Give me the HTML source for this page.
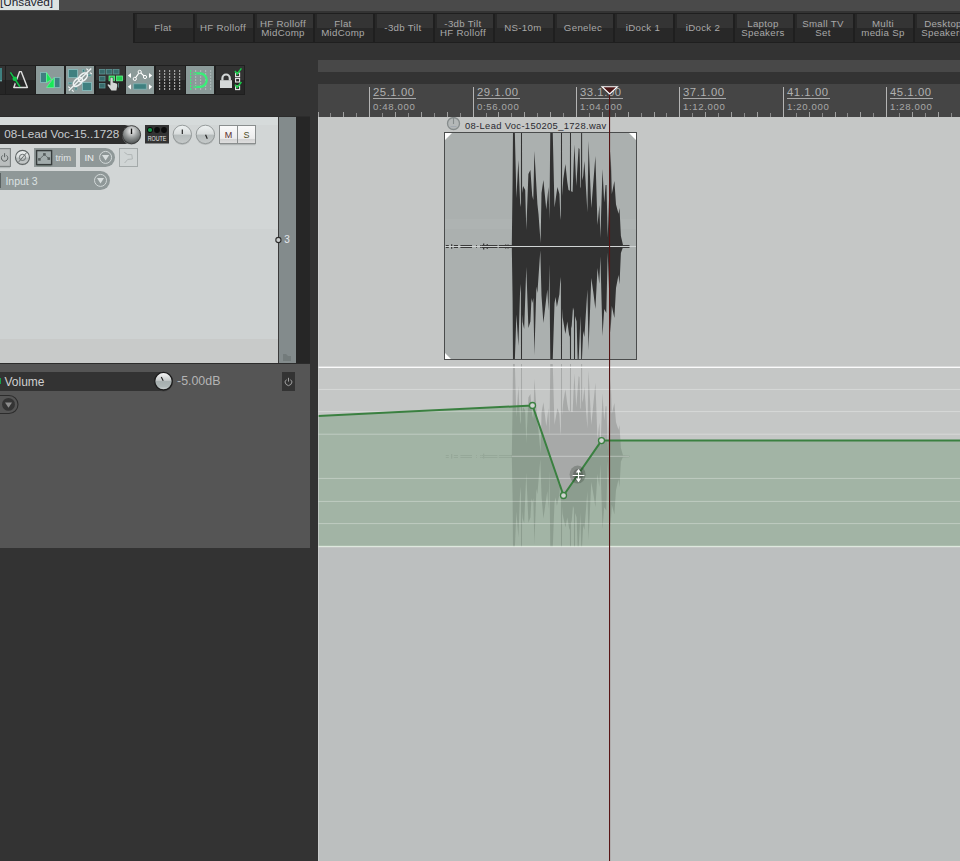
<!DOCTYPE html>
<html><head><meta charset="utf-8"><title>REAPER</title>
<style>
html,body{margin:0;padding:0}
body{width:960px;height:861px;overflow:hidden;background:#333;position:relative;font-family:"Liberation Sans",sans-serif;font-size:10px;color:#a8a8a8}
div,span,svg{position:absolute;box-sizing:border-box}
.t{white-space:nowrap;line-height:1}
/* top */
#topstrip{left:0;top:0;width:960px;height:11px;background:#4a4a4a}
#tab{left:0;top:0;width:59px;height:10px;background:#dde3e3;overflow:hidden}
#tab .t{left:0px;top:-3px;font-size:11.8px;color:#1c1c2c}
/* preset buttons */
#pbar{left:132.75px;top:13px;width:840px;height:30px;background:#1f1f1f}
.pb{top:1px;width:58px;height:28px;background:#282828}
.pb i{position:absolute;left:2px;top:0px;right:0px;height:14px;background:#343434}
.pb .t{left:-0.8px;width:58px;text-align:center;font-size:9.7px;letter-spacing:.3px;color:#a8a8a8;line-height:9px}
/* toolbar */
#tb{left:0;top:65px;width:245px;height:30px;background:#1f1f1f}
.b{top:1px;width:29px;height:28px}
.bd{background:linear-gradient(#333 0,#333 49%,#262626 50%,#262626 100%)}
.bl{background:#8b9a99;width:28px}
.last{width:28px}

#ruler{left:318px;top:84px;width:642px;height:33px;background:#454545}
.rl{font-size:11.3px;color:#b0b0b0;letter-spacing:.55px}
.rs{font-size:9.6px;color:#a8a8a8;letter-spacing:.65px}
#tcp{left:0;top:117px;width:278px;height:246px;background:#d2d6d6}
#tcpbar{left:279px;top:117px;width:17px;height:246px;background:#838b8c}
#nm{left:0;top:125px;width:134px;height:18.5px;background:#2e2e2e;border-radius:0 9px 9px 0}
.g{background:#8f9898}
#envp{left:0;top:364px;width:310px;height:184px;background:#555}

</style></head><body>

<div id="topstrip"></div><div id="tab"><span class="t">[Unsaved]</span></div>
<div id="pbar">
<div class="pb" style="left:2px"><i></i><span class="t" style="top:9px">Flat</span></div>
<div class="pb" style="left:62px"><i></i><span class="t" style="top:9px">HF Rolloff</span></div>
<div class="pb" style="left:122px"><i></i><span class="t" style="top:5px">HF Rolloff<br>MidComp</span></div>
<div class="pb" style="left:182px"><i></i><span class="t" style="top:5px">Flat<br>MidComp</span></div>
<div class="pb" style="left:242px"><i></i><span class="t" style="top:9px">-3db Tilt</span></div>
<div class="pb" style="left:302px"><i></i><span class="t" style="top:5px">-3db Tilt<br>HF Rolloff</span></div>
<div class="pb" style="left:362px"><i></i><span class="t" style="top:9px">NS-10m</span></div>
<div class="pb" style="left:422px"><i></i><span class="t" style="top:9px">Genelec</span></div>
<div class="pb" style="left:482px"><i></i><span class="t" style="top:9px">iDock 1</span></div>
<div class="pb" style="left:542px"><i></i><span class="t" style="top:9px">iDock 2</span></div>
<div class="pb" style="left:602px"><i></i><span class="t" style="top:5px">Laptop<br>Speakers</span></div>
<div class="pb" style="left:662px"><i></i><span class="t" style="top:5px">Small TV<br>Set</span></div>
<div class="pb" style="left:722px"><i></i><span class="t" style="top:5px">Multi<br>media Sp</span></div>
<div class="pb" style="left:782px"><i></i><span class="t" style="top:5px">Desktop<br>Speakers</span></div>
</div>
<div style="left:318px;top:60px;width:642px;height:12px;background:#484848"></div>
<div id="tb">
<div class="b bd" style="left:-24px"></div>
<div class="b bd" style="left:6px"></div>
<div class="b bl" style="left:36px"></div>
<div class="b bl" style="left:66px"></div>
<div class="b bd" style="left:96px"></div>
<div class="b bl" style="left:126px"></div>
<div class="b bd" style="left:156px"></div>
<div class="b bl" style="left:186px"></div>
<div class="b bd last" style="left:216px"></div>
</div>
<svg id="tbi" style="left:0;top:60px" width="250" height="40" viewBox="0 60 250 40">
<rect x="0" y="68" width="2" height="13" fill="#3f8080"/><rect x="0" y="80" width="2" height="1.4" fill="#6aa0a0"/>
<path d="M19.6 71.6 L21.2 71.6 L27.4 87.4 L13.8 87.4 Z" fill="none" stroke="#dedede" stroke-width="1.45" stroke-linejoin="round"/>
<line x1="11" y1="73.5" x2="19.4" y2="86" stroke="#2c2c2c" stroke-width="3.6"/>
<line x1="10.4" y1="72.4" x2="20" y2="86.8" stroke="#10c848" stroke-width="1.5"/><circle cx="14.8" cy="78.8" r="2.3" fill="#10c848"/>
<rect x="40.5" y="72.5" width="6" height="10" fill="#3f8080" stroke="#82b4b4" stroke-width="1"/>
<rect x="54.5" y="77.5" width="5.5" height="10" fill="#3f8080" stroke="#82b4b4" stroke-width="1"/>
<path d="M46.5 72.5 L51.5 79.5 L46.5 82.5 Z" fill="#18e858" stroke="#70ffa0" stroke-width=".6"/>
<path d="M54 77.5 L54 87.5 L46.5 87.5 Z" fill="#18e858" stroke="#70ffa0" stroke-width=".6"/>
<rect x="68.5" y="69.5" width="9" height="8" fill="#3f8080" stroke="#82b4b4"/>
<rect x="82.5" y="82.5" width="9" height="8" fill="#3f8080" stroke="#82b4b4"/>
<rect x="82.5" y="69.5" width="2" height="2.5" fill="#3f8080" stroke="#82b4b4" stroke-width=".6"/><rect x="88" y="74.5" width="3" height="1.5" fill="#3f8080" stroke="#82b4b4" stroke-width=".6"/>
<rect x="68.5" y="82.5" width="3.5" height="1.5" fill="#3f8080" stroke="#82b4b4" stroke-width=".6"/><rect x="75" y="87.5" width="2" height="2.5" fill="#3f8080" stroke="#82b4b4" stroke-width=".6"/>
<g fill="none" stroke="#eef2f2" stroke-width="1.6"><ellipse cx="77.9" cy="81.9" rx="5.4" ry="3.1" transform="rotate(-43 77.9 81.9)"/><ellipse cx="82.9" cy="77.3" rx="5.4" ry="3.1" transform="rotate(-43 82.9 77.3)"/><line x1="68.8" y1="90.6" x2="91.2" y2="68.6" stroke-width="1.4"/><path d="M86.4 68.6 L88.2 70.2 M90 72.6 L91.8 74 M68.2 86.6 L70 88 M72 89.8 L73.6 91.6" stroke-width="1.2"/></g>
<rect x="99.5" y="69.5" width="5.5" height="4.5" fill="#386c6c" stroke="#5f9494" stroke-width=".8"/>
<rect x="106.5" y="69.5" width="5.5" height="4.5" fill="#386c6c" stroke="#5f9494" stroke-width=".8"/>
<rect x="113.5" y="69.5" width="5.5" height="4.5" fill="#386c6c" stroke="#5f9494" stroke-width=".8"/>
<rect x="99.5" y="76.5" width="5.5" height="4.5" fill="#386c6c" stroke="#5f9494" stroke-width=".8"/>
<rect x="99.5" y="83.5" width="5.5" height="4.5" fill="#386c6c" stroke="#5f9494" stroke-width=".8"/>
<rect x="109" y="76" width="5.5" height="4.8" fill="#22d050" stroke="#66f090" stroke-width=".8"/><rect x="116.5" y="76" width="6" height="4.8" fill="#22d050" stroke="#66f090" stroke-width=".8"/>
<path d="M110.4 78.2 Q111.6 76.8 112.8 78.2 L112.8 82.6 L116.6 83.4 Q117.4 84 117.2 86 L116.4 90.6 L111.4 90.6 L107.6 85.2 Q107.4 83.8 109 84.4 L110.4 85.6 Z" fill="#d2d6d6" stroke="#2a2a2a" stroke-width=".9" paint-order="stroke"/>
<rect x="118.2" y="83" width="0.8" height="4.6" fill="#5f8f8f"/>
<g fill="#fff"><path d="M127.8 75.5 L131 72.9 L131 78.1Z"/><path d="M127.8 86.8 L131 84.2 L131 89.4Z"/><path d="M152.2 75.5 L149 72.9 L149 78.1Z"/><path d="M152.2 86.8 L149 84.2 L149 89.4Z"/></g>
<path d="M134.8 78.9 L139.7 71.9 L145 77" fill="none" stroke="#fff" stroke-width="1.1"/>
<circle cx="134.8" cy="78.9" r="1.6" fill="#8b9a99" stroke="#fff" stroke-width="1"/>
<circle cx="139.7" cy="71.9" r="1.6" fill="#8b9a99" stroke="#fff" stroke-width="1"/>
<circle cx="145.0" cy="77.0" r="1.6" fill="#8b9a99" stroke="#fff" stroke-width="1"/>
<rect x="133.7" y="83.8" width="12.6" height="5.4" fill="#3f8080" stroke="#82b4b4" stroke-width=".8"/>
<rect x="159" y="70" width="1.2" height="2" fill="#a4a4a4"/>
<rect x="159" y="73" width="1.2" height="2" fill="#a4a4a4"/>
<rect x="159" y="76" width="1.2" height="2" fill="#a4a4a4"/>
<rect x="159" y="79" width="1.2" height="2" fill="#a4a4a4"/>
<rect x="159" y="82" width="1.2" height="2" fill="#a4a4a4"/>
<rect x="159" y="85" width="1.2" height="2" fill="#a4a4a4"/>
<rect x="159" y="88" width="1.2" height="2" fill="#a4a4a4"/>
<rect x="164" y="70" width="1.2" height="2" fill="#a4a4a4"/>
<rect x="164" y="73" width="1.2" height="2" fill="#a4a4a4"/>
<rect x="164" y="76" width="1.2" height="2" fill="#a4a4a4"/>
<rect x="164" y="79" width="1.2" height="2" fill="#a4a4a4"/>
<rect x="164" y="82" width="1.2" height="2" fill="#a4a4a4"/>
<rect x="164" y="85" width="1.2" height="2" fill="#a4a4a4"/>
<rect x="164" y="88" width="1.2" height="2" fill="#a4a4a4"/>
<rect x="169" y="70" width="1.2" height="2" fill="#a4a4a4"/>
<rect x="169" y="73" width="1.2" height="2" fill="#a4a4a4"/>
<rect x="169" y="76" width="1.2" height="2" fill="#a4a4a4"/>
<rect x="169" y="79" width="1.2" height="2" fill="#a4a4a4"/>
<rect x="169" y="82" width="1.2" height="2" fill="#a4a4a4"/>
<rect x="169" y="85" width="1.2" height="2" fill="#a4a4a4"/>
<rect x="169" y="88" width="1.2" height="2" fill="#a4a4a4"/>
<rect x="174" y="70" width="1.2" height="2" fill="#a4a4a4"/>
<rect x="174" y="73" width="1.2" height="2" fill="#a4a4a4"/>
<rect x="174" y="76" width="1.2" height="2" fill="#a4a4a4"/>
<rect x="174" y="79" width="1.2" height="2" fill="#a4a4a4"/>
<rect x="174" y="82" width="1.2" height="2" fill="#a4a4a4"/>
<rect x="174" y="85" width="1.2" height="2" fill="#a4a4a4"/>
<rect x="174" y="88" width="1.2" height="2" fill="#a4a4a4"/>
<rect x="179" y="70" width="1.2" height="2" fill="#a4a4a4"/>
<rect x="179" y="73" width="1.2" height="2" fill="#a4a4a4"/>
<rect x="179" y="76" width="1.2" height="2" fill="#a4a4a4"/>
<rect x="179" y="79" width="1.2" height="2" fill="#a4a4a4"/>
<rect x="179" y="82" width="1.2" height="2" fill="#a4a4a4"/>
<rect x="179" y="85" width="1.2" height="2" fill="#a4a4a4"/>
<rect x="179" y="88" width="1.2" height="2" fill="#a4a4a4"/>
<rect x="190" y="70" width="1.2" height="2" fill="#3cf078"/>
<rect x="190" y="73" width="1.2" height="2" fill="#3cf078"/>
<rect x="190" y="76" width="1.2" height="2" fill="#3cf078"/>
<rect x="190" y="79" width="1.2" height="2" fill="#3cf078"/>
<rect x="190" y="82" width="1.2" height="2" fill="#3cf078"/>
<rect x="190" y="85" width="1.2" height="2" fill="#3cf078"/>
<rect x="190" y="88" width="1.2" height="2" fill="#3cf078"/>
<rect x="195" y="70" width="1.2" height="2" fill="#a9b6b5"/>
<rect x="195" y="73" width="1.2" height="2" fill="#a9b6b5"/>
<rect x="195" y="76" width="1.2" height="2" fill="#a9b6b5"/>
<rect x="195" y="79" width="1.2" height="2" fill="#a9b6b5"/>
<rect x="195" y="82" width="1.2" height="2" fill="#a9b6b5"/>
<rect x="195" y="85" width="1.2" height="2" fill="#a9b6b5"/>
<rect x="195" y="88" width="1.2" height="2" fill="#a9b6b5"/>
<rect x="200" y="70" width="1.2" height="2" fill="#a9b6b5"/>
<rect x="200" y="73" width="1.2" height="2" fill="#a9b6b5"/>
<rect x="200" y="76" width="1.2" height="2" fill="#a9b6b5"/>
<rect x="200" y="79" width="1.2" height="2" fill="#a9b6b5"/>
<rect x="200" y="82" width="1.2" height="2" fill="#a9b6b5"/>
<rect x="200" y="85" width="1.2" height="2" fill="#a9b6b5"/>
<rect x="200" y="88" width="1.2" height="2" fill="#a9b6b5"/>
<rect x="205" y="70" width="1.2" height="2" fill="#a9b6b5"/>
<rect x="205" y="73" width="1.2" height="2" fill="#a9b6b5"/>
<rect x="205" y="76" width="1.2" height="2" fill="#a9b6b5"/>
<rect x="205" y="79" width="1.2" height="2" fill="#a9b6b5"/>
<rect x="205" y="82" width="1.2" height="2" fill="#a9b6b5"/>
<rect x="205" y="85" width="1.2" height="2" fill="#a9b6b5"/>
<rect x="205" y="88" width="1.2" height="2" fill="#a9b6b5"/>
<rect x="210" y="70" width="1.2" height="2" fill="#a9b6b5"/>
<rect x="210" y="73" width="1.2" height="2" fill="#a9b6b5"/>
<rect x="210" y="76" width="1.2" height="2" fill="#a9b6b5"/>
<rect x="210" y="79" width="1.2" height="2" fill="#a9b6b5"/>
<rect x="210" y="82" width="1.2" height="2" fill="#a9b6b5"/>
<rect x="210" y="85" width="1.2" height="2" fill="#a9b6b5"/>
<rect x="210" y="88" width="1.2" height="2" fill="#a9b6b5"/>
<path d="M193.4 73.4 L200 73.4 A6.7 6.7 0 0 1 200 86.8 L193.4 86.8" fill="none" stroke="#38f078" stroke-width="2.3"/>
<path d="M193.8 73.4 L196.4 73.4 M193.8 86.8 L196.4 86.8" fill="none" stroke="#8b9a99" stroke-width="1"/>
<rect x="220" y="80.2" width="12" height="7.8" fill="#d4d8d8"/>
<path d="M222.4 80.4 L222.4 78.4 A3.7 3.9 0 0 1 229.8 78.4 L229.8 80.4" fill="none" stroke="#d4d8d8" stroke-width="2.2"/>
<rect x="235.6" y="73.0" width="4" height="3.6" fill="none" stroke="#e8e8e8" stroke-width="1.1"/>
<rect x="235.6" y="78.4" width="4" height="3.6" fill="none" stroke="#e8e8e8" stroke-width="1.1"/>
<rect x="235.6" y="86.0" width="4" height="3.6" fill="none" stroke="#e8e8e8" stroke-width="1.1"/>
<path d="M235 71 L237.2 74 L241.4 68.4 M235 84.6 L237.2 87.6 L241.4 82" fill="none" stroke="#18d048" stroke-width="1.5"/>
</svg>

<div id="ruler"></div>
<svg style="left:318px;top:84px" width="642" height="33" viewBox="318 84 642 33" shape-rendering="crispEdges">
<rect x="318" y="112" width="1" height="5" fill="#a0a0a0"/>
<rect x="330" y="113" width="1" height="4" fill="#8a8a8a"/>
<rect x="343" y="112" width="1" height="5" fill="#a0a0a0"/>
<rect x="356" y="113" width="1" height="4" fill="#8a8a8a"/>
<rect x="369" y="87" width="1" height="30" fill="#b4b4b4"/>
<rect x="382" y="113" width="1" height="4" fill="#8a8a8a"/>
<rect x="395" y="112" width="1" height="5" fill="#a0a0a0"/>
<rect x="408" y="113" width="1" height="4" fill="#8a8a8a"/>
<rect x="421" y="112" width="1" height="5" fill="#a0a0a0"/>
<rect x="434" y="113" width="1" height="4" fill="#8a8a8a"/>
<rect x="447" y="112" width="1" height="5" fill="#a0a0a0"/>
<rect x="460" y="113" width="1" height="4" fill="#8a8a8a"/>
<rect x="473" y="87" width="1" height="30" fill="#b4b4b4"/>
<rect x="486" y="113" width="1" height="4" fill="#8a8a8a"/>
<rect x="498" y="112" width="1" height="5" fill="#a0a0a0"/>
<rect x="511" y="113" width="1" height="4" fill="#8a8a8a"/>
<rect x="524" y="112" width="1" height="5" fill="#a0a0a0"/>
<rect x="537" y="113" width="1" height="4" fill="#8a8a8a"/>
<rect x="550" y="112" width="1" height="5" fill="#a0a0a0"/>
<rect x="563" y="113" width="1" height="4" fill="#8a8a8a"/>
<rect x="576" y="87" width="1" height="30" fill="#b4b4b4"/>
<rect x="589" y="113" width="1" height="4" fill="#8a8a8a"/>
<rect x="602" y="112" width="1" height="5" fill="#a0a0a0"/>
<rect x="615" y="113" width="1" height="4" fill="#8a8a8a"/>
<rect x="628" y="112" width="1" height="5" fill="#a0a0a0"/>
<rect x="641" y="113" width="1" height="4" fill="#8a8a8a"/>
<rect x="654" y="112" width="1" height="5" fill="#a0a0a0"/>
<rect x="666" y="113" width="1" height="4" fill="#8a8a8a"/>
<rect x="679" y="87" width="1" height="30" fill="#b4b4b4"/>
<rect x="692" y="113" width="1" height="4" fill="#8a8a8a"/>
<rect x="705" y="112" width="1" height="5" fill="#a0a0a0"/>
<rect x="718" y="113" width="1" height="4" fill="#8a8a8a"/>
<rect x="731" y="112" width="1" height="5" fill="#a0a0a0"/>
<rect x="744" y="113" width="1" height="4" fill="#8a8a8a"/>
<rect x="757" y="112" width="1" height="5" fill="#a0a0a0"/>
<rect x="770" y="113" width="1" height="4" fill="#8a8a8a"/>
<rect x="783" y="87" width="1" height="30" fill="#b4b4b4"/>
<rect x="796" y="113" width="1" height="4" fill="#8a8a8a"/>
<rect x="809" y="112" width="1" height="5" fill="#a0a0a0"/>
<rect x="822" y="113" width="1" height="4" fill="#8a8a8a"/>
<rect x="835" y="112" width="1" height="5" fill="#a0a0a0"/>
<rect x="847" y="113" width="1" height="4" fill="#8a8a8a"/>
<rect x="860" y="112" width="1" height="5" fill="#a0a0a0"/>
<rect x="873" y="113" width="1" height="4" fill="#8a8a8a"/>
<rect x="886" y="87" width="1" height="30" fill="#b4b4b4"/>
<rect x="899" y="113" width="1" height="4" fill="#8a8a8a"/>
<rect x="912" y="112" width="1" height="5" fill="#a0a0a0"/>
<rect x="925" y="113" width="1" height="4" fill="#8a8a8a"/>
<rect x="938" y="112" width="1" height="5" fill="#a0a0a0"/>
<rect x="951" y="113" width="1" height="4" fill="#8a8a8a"/>
<rect x="373" y="98" width="43" height="1" fill="#a8a8a8"/>
<rect x="477" y="98" width="43" height="1" fill="#a8a8a8"/>
<rect x="580" y="98" width="43" height="1" fill="#a8a8a8"/>
<rect x="683" y="98" width="43" height="1" fill="#a8a8a8"/>
<rect x="787" y="98" width="43" height="1" fill="#a8a8a8"/>
<rect x="890" y="98" width="43" height="1" fill="#a8a8a8"/>
</svg>
<span class="t rl" style="left:373px;top:87px">25.1.00</span><span class="t rs" style="left:373px;top:101.6px">0:48.000</span>
<span class="t rl" style="left:477px;top:87px">29.1.00</span><span class="t rs" style="left:477px;top:101.6px">0:56.000</span>
<span class="t rl" style="left:580px;top:87px">33.1.00</span><span class="t rs" style="left:580px;top:101.6px">1:04.000</span>
<span class="t rl" style="left:683px;top:87px">37.1.00</span><span class="t rs" style="left:683px;top:101.6px">1:12.000</span>
<span class="t rl" style="left:787px;top:87px">41.1.00</span><span class="t rs" style="left:787px;top:101.6px">1:20.000</span>
<span class="t rl" style="left:890px;top:87px">45.1.00</span><span class="t rs" style="left:890px;top:101.6px">1:28.000</span>
<svg style="left:596px;top:84px" width="28" height="34" viewBox="596 84 28 34"><path d="M602 86.7 L617.4 86.7 L609.7 94 Z" fill="#4c1616" stroke="#fff" stroke-width="1.1" stroke-linejoin="miter"/><rect x="609" y="94.5" width="1.1" height="23" fill="#561414"/></svg>
<div id="tcp"><div style="left:0;top:0;width:278px;height:8px;background:#d6dbdb"></div><div style="left:0;top:112px;width:278px;height:110px;background:#ced2d2"></div><div style="left:0;top:222px;width:278px;height:24px;background:#c8cac9"></div></div>
<div style="left:278px;top:117px;width:1px;height:246px;background:#3a3a3a"></div>
<div id="tcpbar"></div><div style="left:0;top:116px;width:310px;height:1px;background:#2c2c2c"></div>
<div style="left:296px;top:117px;width:14px;height:246px;background:#262626"></div>
<div style="left:0;top:363px;width:310px;height:1px;background:#2c2c2c"></div>
<div id="nm"><span class="t" style="left:4.3px;top:3.2px;font-size:11.7px;color:#c8ccd0">08-Lead Voc-15..1728</span></div>
<svg style="left:0;top:117px" width="318" height="440" viewBox="0 117 318 440">
<defs>
<radialGradient id="kd" cx="50%" cy="30%" r="70%"><stop offset="0" stop-color="#f6f6f6"/><stop offset=".5" stop-color="#9a9e9e"/><stop offset="1" stop-color="#4c5050"/></radialGradient>
<linearGradient id="kl" x1="0" y1="0" x2="0" y2="1"><stop offset="0" stop-color="#eef2f2"/><stop offset=".48" stop-color="#d8dcdc"/><stop offset=".54" stop-color="#b6bcbc"/><stop offset="1" stop-color="#c6caca"/></linearGradient>
<linearGradient id="ms" x1="0" y1="0" x2="0" y2="1"><stop offset="0" stop-color="#fafafa"/><stop offset=".72" stop-color="#ececec"/><stop offset=".75" stop-color="#d2d2d2"/><stop offset="1" stop-color="#e0e0e0"/></linearGradient>
<linearGradient id="ke" x1="0" y1="0" x2="0" y2="1"><stop offset="0" stop-color="#fafafa"/><stop offset=".45" stop-color="#c6caca"/><stop offset=".52" stop-color="#a6aeae"/><stop offset=".8" stop-color="#aeb6b6"/><stop offset="1" stop-color="#d4d8d8"/></linearGradient>
</defs>
<circle cx="131.5" cy="135.4" r="9.5" fill="#a8adad" opacity=".6"/>
<circle cx="131.5" cy="134.7" r="9.1" fill="url(#kd)" stroke="#2a2a2a" stroke-width=".8"/>
<line x1="131.5" y1="128.6" x2="131.5" y2="134" stroke="#111" stroke-width="1.4"/>
<rect x="145" y="125" width="24" height="18.5" fill="#333"/>
<circle cx="150" cy="130" r="2.9" fill="#0c0c0c"/><circle cx="150" cy="130" r="2.1" fill="#14964a"/><circle cx="157" cy="130" r="2.9" fill="#0c0c0c"/><circle cx="164" cy="130" r="2.9" fill="#0c0c0c"/>
<text x="157" y="140.9" font-family="Liberation Sans, sans-serif" font-size="6.8" fill="#e4e4e4" text-anchor="middle" textLength="18.5" lengthAdjust="spacingAndGlyphs">ROUTE</text>
<circle cx="182.3" cy="135.6" r="9.3" fill="#a9aeae" opacity=".7"/>
<circle cx="182.3" cy="134.4" r="9.2" fill="url(#kl)" stroke="#8e9494" stroke-width=".9"/>
<line x1="182.3" y1="129.6" x2="182.3" y2="134" stroke="#222" stroke-width="1.15" transform="rotate(0 182.3 134.4)"/>
<circle cx="205.4" cy="135.6" r="9.3" fill="#a9aeae" opacity=".7"/>
<circle cx="205.4" cy="134.4" r="9.2" fill="url(#kl)" stroke="#8e9494" stroke-width=".9"/>
<line x1="205.4" y1="129.6" x2="205.4" y2="134" stroke="#222" stroke-width="1.15" transform="rotate(157 205.4 134.4)"/>
<rect x="219.5" y="125.5" width="18" height="18" fill="url(#ms)" stroke="#8a8e8e"/>
<rect x="237.5" y="125.5" width="18" height="18" fill="url(#ms)" stroke="#8a8e8e"/>
<rect x="220" y="144" width="35.5" height="1.2" fill="#b0b5b5"/>
<text x="228.5" y="137.8" font-family="Liberation Sans, sans-serif" font-size="9" fill="#5a2c2c" text-anchor="middle">M</text>
<text x="246.5" y="137.8" font-family="Liberation Sans, sans-serif" font-size="9" fill="#4c4a22" text-anchor="middle">S</text>
<rect x="0" y="167" width="10" height="1.2" fill="#b4baba"/><rect x="-1" y="148.6" width="11.4" height="17.8" fill="#babebe" stroke="#7c8282" stroke-width="1.1"/>
<path d="M2.7 155.4 A3.2 3.2 0 1 0 6.5 155.4 M4.6 153.2 L4.6 157.2" fill="none" stroke="#5a6060" stroke-width="1"/>
<circle cx="22.5" cy="158.2" r="7.2" fill="#a9aeae" opacity=".6"/>
<circle cx="22.5" cy="157.4" r="7" fill="url(#kl)" stroke="#5e6464" stroke-width="1.1"/>
<circle cx="22.5" cy="157.4" r="3.1" fill="none" stroke="#6a7070" stroke-width="1"/><line x1="18.6" y1="162" x2="26.8" y2="152.4" stroke="#6a7070" stroke-width="1"/>
<rect x="34" y="148" width="42" height="19" fill="#8f9898"/>
<rect x="37" y="165.2" width="14" height="1" fill="#79857f"/><rect x="36.6" y="150.6" width="15" height="14" fill="#a2acac" stroke="#363c3c" stroke-width="1.4"/>
<path d="M39.4 159.4 L44.4 154.4 L48.8 158.6" fill="none" stroke="#555c5c" stroke-width="1" stroke-dasharray="1.2 .6"/>
<rect x="38.1" y="158.1" width="2.6" height="2.6" fill="#555c5c"/>
<rect x="43.1" y="153.1" width="2.6" height="2.6" fill="#555c5c"/>
<rect x="47.5" y="157.3" width="2.6" height="2.6" fill="#555c5c"/>
<text x="55.4" y="161.2" font-family="Liberation Sans, sans-serif" font-size="9.4" fill="#e2e6e6">trim</text>
<path d="M80 148 L105.5 148 A9.5 9.5 0 0 1 105.5 167 L80 167 Z" fill="#8f9898"/>
<text x="84.4" y="160.9" font-family="Liberation Sans, sans-serif" font-size="9.6" fill="#eef0f0">IN</text>
<circle cx="105.6" cy="157.4" r="6" fill="none" stroke="#d2d8d8" stroke-width="1"/><path d="M102 155 L109.2 155 L105.6 160.6 Z" fill="#d8dede"/>
<rect x="119.5" y="148.5" width="18" height="18" fill="#d0d5d5" stroke="#a4aaaa"/>
<path d="M124.4 152.4 L127.6 154.6 L131.8 154.6 L132.4 159 L127.8 159.4 L124.6 163" fill="none" stroke="#b0b6b6" stroke-width="1"/>
<path d="M0 171 L100.5 171 A9.5 9.5 0 0 1 100.5 190 L0 190 Z" fill="#8f9898"/>
<rect x="0" y="173" width="1" height="15" fill="#5a6262"/>
<text x="5.4" y="184.5" font-family="Liberation Sans, sans-serif" font-size="10.5" fill="#dce2e2">Input 3</text>
<circle cx="100.5" cy="180.4" r="6" fill="none" stroke="#d2d8d8" stroke-width="1"/><path d="M97 178 L104 178 L100.5 183.6 Z" fill="#d8dede"/>
<circle cx="278.4" cy="240" r="2.6" fill="#c8cccc" stroke="#2c2c2c" stroke-width="1.1"/>
<text x="284.2" y="243.4" font-family="Liberation Sans, sans-serif" font-size="10" fill="#e4e8ec">3</text>
<path d="M283 354 L286 354 L288 356 L291 356 L291 361 L283 361 Z" fill="#737b7b"/>
</svg>
<div id="envp"></div>
<div style="left:0;top:372px;width:161px;height:19px;background:#333"></div>
<div style="left:0;top:378px;width:1px;height:6px;background:#18a048"></div>
<span class="t" style="left:4.5px;top:375.6px;font-size:12px;color:#d0d0d0">Volume</span>
<span class="t" style="left:177px;top:375.2px;font-size:12.4px;color:#b4b4b4">-5.00dB</span>
<svg style="left:0;top:364px" width="310" height="60" viewBox="0 364 310 60">
<circle cx="163.5" cy="382.2" r="9.2" fill="#3c3c3c" opacity=".7"/>
<circle cx="163.5" cy="381.2" r="8.8" fill="url(#ke)" stroke="#1c1c1c" stroke-width="1.3"/>
<line x1="163.5" y1="376.4" x2="163.5" y2="380.6" stroke="#222" stroke-width="1.15" transform="rotate(-28 163.5 381.2)"/>
<rect x="282" y="372" width="13" height="19" fill="#333"/>
<path d="M286.4 379.6 A3.3 3.3 0 1 0 290.6 379.6 M288.5 377.8 L288.5 381.6" fill="none" stroke="#a0a0a0" stroke-width="1"/>
<path d="M-2 395.5 L9 395.5 A9 9 0 0 1 9 413.5 L-2 413.5 Z" fill="#555" stroke="#2c2c2c" stroke-width="1.1"/>
<circle cx="8.5" cy="404.4" r="6.4" fill="#343434"/><path d="M5 402.4 L12 402.4 L8.5 407.8 Z" fill="#8c8c8c"/>
</svg>
<div style="left:318px;top:117px;width:642px;height:431px;background:#c5c7c6"></div>
<div style="left:318px;top:548px;width:642px;height:313px;background:#bcbfbf"></div>
<span class="t" style="left:465px;top:120.6px;font-size:9.4px;letter-spacing:.34px;color:#2a2a30">08-Lead Voc-150205_1728.wav</span>
<svg style="left:318px;top:117px" width="642" height="744" viewBox="318 117 642 744">
<circle cx="453.5" cy="123.5" r="6" fill="#b4b8b8" stroke="#868c8c" stroke-width="1.3"/><line x1="453.5" y1="118" x2="453.5" y2="124" stroke="#868c8c" stroke-width="1.1"/><line x1="450.5" y1="126.6" x2="456.5" y2="126.6" stroke="#a0a8b0" stroke-width="1"/>
<rect x="444.5" y="132.5" width="192" height="227" fill="#abb0af" stroke="#4a4c4c" stroke-width="1"/>
<rect x="445" y="219" width="191" height="10" fill="#aeb3b2"/>
<clipPath id="itc"><rect x="445" y="133" width="191" height="226"/></clipPath>
<polygon points="511.8,246.0 512.6,180.0 513.0,131.0 514.8,131.0 516.4,198.0 518.4,160.0 520.3,207.0 520.9,202.9 521.0,131.0 522.0,131.0 522.1,193.1 523.1,186.0 525.2,190.0 526.3,230.0 528.4,174.0 530.4,170.0 532.2,195.5 533.3,200.0 534.4,151.0 537.4,204.0 538.5,214.0 540.6,243.0 541.5,193.0 543.4,180.0 546.3,209.5 548.5,187.0 549.4,220.0 550.3,131.0 552.7,131.0 554.5,207.5 557.4,187.0 559.4,194.0 560.5,220.0 560.9,214.9 561.0,131.0 562.0,131.0 562.1,195.8 563.3,179.0 565.4,164.0 567.3,182.0 568.5,190.0 569.9,190.7 570.0,131.0 571.0,131.0 571.1,191.3 572.6,192.0 574.4,144.6 576.3,186.0 578.6,148.0 579.5,149.0 580.5,188.6 581.0,186.5 581.1,131.0 582.1,131.0 582.2,180.4 583.2,176.0 584.4,161.0 587.4,212.3 588.5,141.0 591.3,208.0 595.4,156.0 597.5,225.0 599.4,205.0 600.4,238.0 602.5,169.0 604.2,202.5 605.6,185.0 606.5,185.0 607.7,237.4 610.7,151.0 611.8,194.0 614.4,181.0 616.0,204.6 618.5,213.7 619.5,208.0 620.9,236.0 623.0,245.0 629.3,245.4 629.3,247.6 622.7,248.0 620.9,253.0 619.5,284.5 618.5,275.0 616.0,288.0 614.4,318.0 611.8,306.0 610.6,332.7 607.7,252.5 606.3,313.0 604.2,309.0 602.5,336.0 600.4,256.6 599.3,284.0 597.5,268.0 595.4,309.0 593.4,293.0 591.3,278.0 588.5,350.0 587.4,289.4 584.4,337.0 583.2,331.0 581.9,361.0 581.2,361.0 580.5,316.0 579.5,340.0 578.6,361.0 577.7,361.0 576.6,321.5 575.1,315.9 575.0,361.0 574.0,361.0 573.9,310.8 573.0,307.5 571.7,325.7 571.1,328.4 571.0,361.0 570.0,361.0 569.9,334.8 569.4,337.0 567.3,321.5 565.4,334.0 562.6,317.3 562.1,308.7 562.0,361.0 561.0,361.0 560.9,283.7 560.5,277.0 559.4,294.3 556.9,307.0 555.5,297.0 554.5,303.4 552.7,361.0 550.3,361.0 549.4,264.3 548.5,311.0 547.3,289.4 543.4,323.0 541.5,295.7 540.3,250.4 537.4,293.0 536.4,286.6 534.4,355.0 533.3,298.0 532.3,303.0 531.5,298.0 530.4,321.5 528.4,328.0 526.3,267.0 524.2,329.0 522.6,322.0 522.1,314.6 522.0,361.0 521.0,361.0 520.9,293.1 520.3,284.0 518.4,346.0 516.4,314.5 514.8,361.0 513.0,361.0 512.6,300.0 511.8,247.0" fill="#313131" clip-path="url(#itc)"/>
<g fill="#3a3a3a">
<rect x="445.8" y="245" width="3.0" height="3" />
<rect x="453.8" y="245" width="4.2" height="3" />
<rect x="460.4" y="245" width="11.6" height="3" />
<rect x="476.0" y="245" width="0.8" height="3" />
<rect x="480.0" y="245" width="0.8" height="3" />
<rect x="481.3" y="245" width="16.2" height="3" />
<rect x="498.8" y="245" width="13.2" height="3" />
<rect x="451.0" y="244.3" width="1.3" height="4.4"/>
<rect x="483.0" y="243.5" width="1.3" height="6.0"/>
<rect x="486.6" y="244.1" width="1.3" height="4.8"/>
<rect x="505.0" y="244.5" width="1.3" height="4.0"/>
<rect x="507.4" y="244.5" width="1.3" height="4.0"/>
<rect x="622" y="245" width="7.4" height="3"/>
</g>
<rect x="445" y="246" width="191" height="1" fill="#d0d4d4"/>
<path d="M445 133 L452 133 L445 140 Z M636 133 L629 133 L636 140 Z M445 359 L451 359 L445 353 Z" fill="#fff"/>
<clipPath id="lane"><rect x="318" y="364" width="642" height="183"/></clipPath>
<g clip-path="url(#lane)">
<polygon points="511.8,456.0 512.6,402.3 513.0,362.4 514.8,362.4 516.4,416.9 518.4,386.0 520.3,424.2 520.9,420.9 521.0,362.4 522.0,362.4 522.1,413.0 523.1,407.2 525.2,410.4 526.3,443.0 528.4,397.4 530.4,394.1 532.2,414.9 533.3,418.5 534.4,378.7 537.4,421.8 538.5,429.9 540.6,453.6 541.5,412.8 543.4,402.3 546.3,426.3 548.5,408.0 549.4,434.8 550.3,362.4 552.7,362.4 554.5,424.7 557.4,408.0 559.4,413.7 560.5,434.8 560.9,430.7 561.0,362.4 562.0,362.4 562.1,415.2 563.3,401.5 565.4,389.2 567.3,403.9 568.5,410.4 569.9,410.9 570.0,362.4 571.0,362.4 571.1,411.5 572.6,412.0 574.4,373.4 576.3,407.2 578.6,376.2 579.5,377.0 580.5,409.3 581.0,407.6 581.1,362.4 582.1,362.4 582.2,402.6 583.2,399.0 584.4,386.8 587.4,428.6 588.5,370.5 591.3,425.1 595.4,382.7 597.5,438.9 599.4,422.6 600.4,449.5 602.5,393.3 604.2,420.6 605.6,406.3 606.5,406.3 607.7,449.0 610.7,378.7 611.8,413.7 614.4,403.1 616.0,422.3 618.5,429.7 619.5,425.1 620.9,447.9 623.0,455.2 629.3,455.5 629.3,457.3 622.7,457.6 620.9,461.7 619.5,487.3 618.5,479.6 616.0,490.2 614.4,514.6 611.8,504.8 610.6,526.6 607.7,461.3 606.3,510.5 604.2,507.3 602.5,529.3 600.4,464.6 599.3,486.9 597.5,473.9 595.4,507.3 593.4,494.3 591.3,482.1 588.5,540.7 587.4,491.3 584.4,530.1 583.2,525.2 581.9,549.6 581.2,549.6 580.5,513.0 579.5,532.5 578.6,549.6 577.7,549.6 576.6,517.5 575.1,512.9 575.0,549.6 574.0,549.6 573.9,508.8 573.0,506.1 571.7,520.9 571.1,523.1 571.0,549.6 570.0,549.6 569.9,528.3 569.4,530.1 567.3,517.5 565.4,527.6 562.6,514.0 562.1,507.0 562.0,549.6 561.0,549.6 560.9,486.7 560.5,481.2 559.4,495.3 556.9,505.7 555.5,497.5 554.5,502.7 552.7,549.6 550.3,549.6 549.4,470.9 548.5,508.9 547.3,491.3 543.4,518.7 541.5,496.5 540.3,459.6 537.4,494.3 536.4,489.1 534.4,544.7 533.3,498.3 532.3,502.4 531.5,498.3 530.4,517.5 528.4,522.8 526.3,473.1 524.2,523.6 522.6,517.9 522.1,511.8 522.0,549.6 521.0,549.6 520.9,494.3 520.3,486.9 518.4,537.4 516.4,511.8 514.8,549.6 513.0,549.6 512.6,500.0 511.8,456.8" fill="#000" opacity=".15"/>
<g fill="#000" opacity=".075">
<rect x="445.8" y="455" width="3.0" height="1"/><rect x="445.8" y="457" width="3.0" height="1"/>
<rect x="453.8" y="455" width="4.2" height="1"/><rect x="453.8" y="457" width="4.2" height="1"/>
<rect x="460.4" y="455" width="11.6" height="1"/><rect x="460.4" y="457" width="11.6" height="1"/>
<rect x="476.0" y="455" width="0.8" height="1"/><rect x="476.0" y="457" width="0.8" height="1"/>
<rect x="480.0" y="455" width="0.8" height="1"/><rect x="480.0" y="457" width="0.8" height="1"/>
<rect x="481.3" y="455" width="16.2" height="1"/><rect x="481.3" y="457" width="16.2" height="1"/>
<rect x="498.8" y="455" width="13.2" height="1"/><rect x="498.8" y="457" width="13.2" height="1"/>
<rect x="451" y="454" width="1.3" height="4.6"/><rect x="483" y="453.6" width="1.3" height="5"/>
</g>
<polygon points="318.0,416.0 532.5,405.5 563.5,495.5 601.5,440.6 960.0,440.6 960,546 318,546" fill="#3c7a44" opacity=".25"/>
</g>
<rect x="318" y="366.6" width="642" height="1.4" fill="#fbfbfb"/>
<rect x="318" y="388.9" width="642" height="1" fill="#fff" opacity=".32"/>
<rect x="318" y="411.1" width="642" height="1" fill="#fff" opacity=".32"/>
<rect x="318" y="433.7" width="642" height="1" fill="#fff" opacity=".32"/>
<rect x="318" y="477.9" width="642" height="1" fill="#fff" opacity=".32"/>
<rect x="318" y="500.9" width="642" height="1" fill="#fff" opacity=".32"/>
<rect x="318" y="523.1" width="642" height="1" fill="#fff" opacity=".32"/>
<rect x="318" y="545.8" width="642" height="1.2" fill="#e4f0e4" opacity=".8"/>
<rect x="512" y="455.8" width="117" height="1" fill="#fff" opacity=".35"/>
<polyline points="318.0,416.0 532.5,405.5 563.5,495.5 601.5,440.6 960.0,440.6" fill="none" stroke="#3a8040" stroke-width="2" stroke-linejoin="round"/>
<circle cx="532.5" cy="405.5" r="3" fill="#d0d4d2" stroke="#3a8040" stroke-width="1.3"/>
<circle cx="563.5" cy="495.5" r="3" fill="#d0d4d2" stroke="#3a8040" stroke-width="1.3"/>
<circle cx="601.5" cy="440.6" r="3" fill="#d0d4d2" stroke="#3a8040" stroke-width="1.3"/>
<ellipse cx="577.6" cy="474.6" rx="8" ry="9" fill="#303830" opacity=".28"/><ellipse cx="578" cy="475" rx="5" ry="6" fill="#303030" opacity=".3"/>
<path d="M578.5 470 L578.5 481.4 M572.6 475.5 L584.4 475.5" stroke="#fff" stroke-width="1.2" fill="none"/><path d="M578.5 469 L581.2 472.6 L575.8 472.6 Z M578.5 482.2 L581.2 478.6 L575.8 478.6 Z" fill="#fff"/>
<rect x="609" y="94" width="1.1" height="767" fill="#561414"/>
</svg>
<div style="left:318px;top:117px;width:1px;height:744px;background:#d4d6d6;opacity:.6"></div>
</body></html>
